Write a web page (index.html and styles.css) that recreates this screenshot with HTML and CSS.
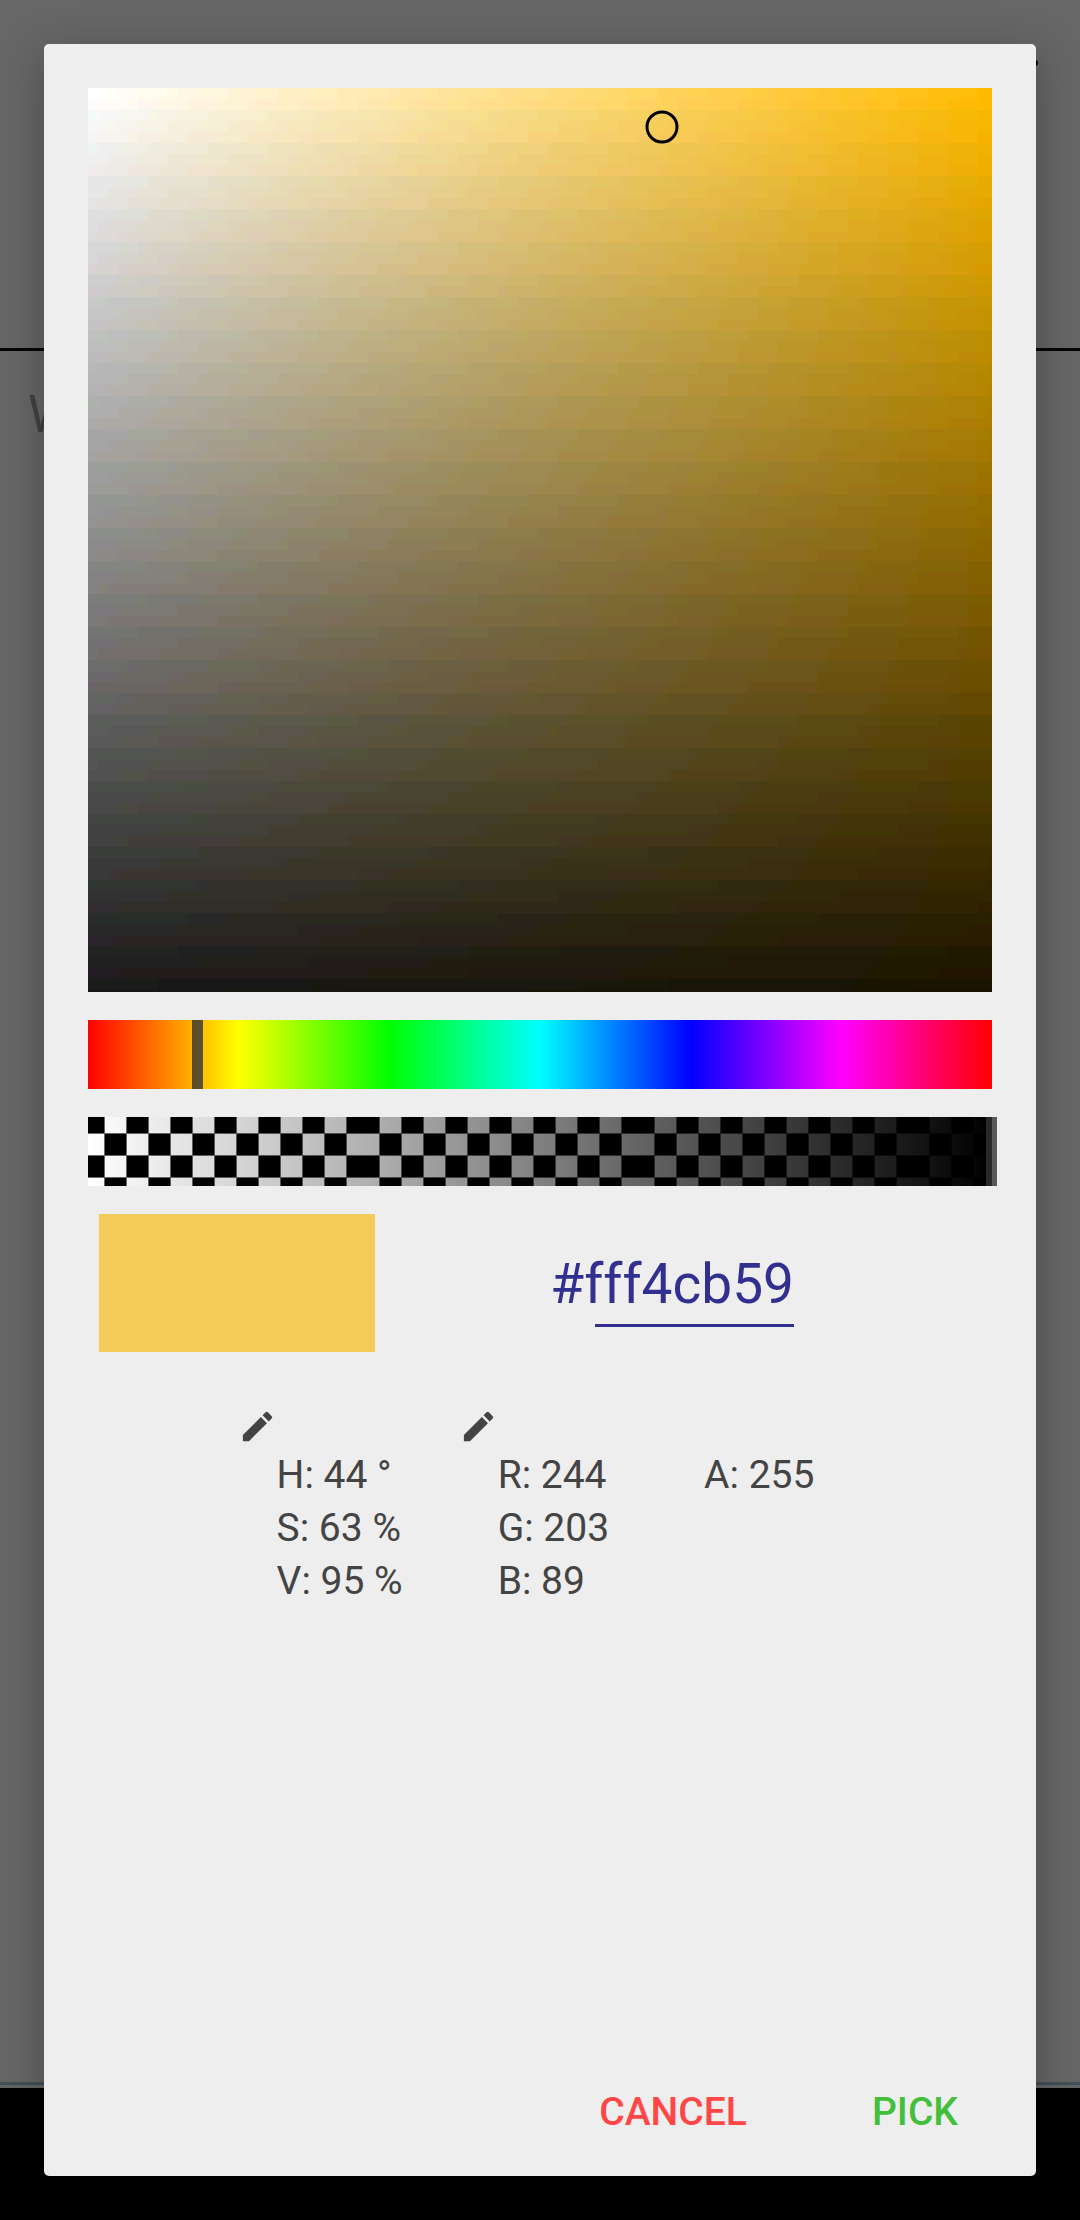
FILE: index.html
```html
<!DOCTYPE html>
<html lang="en">
<head>
<meta charset="utf-8">
<meta name="viewport" content="width=device-width, initial-scale=1">
<title>Color picker</title>
<link rel="stylesheet" href="styles.css">
</head>
<body>
<div class="app" aria-hidden="true">
  <header class="app-bar"><span class="app-dot"></span></header>
  <p class="app-text">W</p>
  <div class="app-footer"></div>
  <div class="nav-bar"></div>
</div>
<div class="overlay">
  <form class="dialog" role="dialog" aria-label="Color picker">
    <div class="picker">
      <div class="field">
        <canvas class="field-canvas" id="field" width="904" height="904"></canvas>
        <span class="ring" style="left:63.5%;top:4.3%"></span>
      </div>
      <div class="track track-hue">
        <input class="slider" type="range" min="0" max="360" value="44" aria-label="Hue">
      </div>
      <div class="track">
        <canvas class="track-canvas" id="alpha" width="904" height="69"></canvas>
        <input class="slider" type="range" min="0" max="255" value="255" aria-label="Alpha">
      </div>
      <div class="result">
        <div class="swatch"></div>
        <input class="hex" type="text" value="#fff4cb59" aria-label="Hex color">
      </div>
      <div class="values">
        <div class="group">
          <button class="edit" type="button" aria-label="Edit HSV"><svg class="icon" viewBox="0 0 24 24"><path d="M3 17.25V21h3.75L17.81 9.94l-3.75-3.75L3 17.25zM20.71 7.04a1 1 0 0 0 0-1.41l-2.34-2.34a1 1 0 0 0-1.41 0l-1.83 1.83 3.75 3.75 1.83-1.83z"/></svg></button>
          <div class="lines"><div>H: 44 °</div><div>S: 63 %</div><div>V: 95 %</div></div>
        </div>
        <div class="group">
          <button class="edit" type="button" aria-label="Edit RGB"><svg class="icon" viewBox="0 0 24 24"><path d="M3 17.25V21h3.75L17.81 9.94l-3.75-3.75L3 17.25zM20.71 7.04a1 1 0 0 0 0-1.41l-2.34-2.34a1 1 0 0 0-1.41 0l-1.83 1.83 3.75 3.75 1.83-1.83z"/></svg></button>
          <div class="lines"><div>R: 244</div><div>G: 203</div><div>B: 89</div></div>
        </div>
        <div class="group">
          <div class="lines"><div>A: 255</div></div>
        </div>
      </div>
    </div>
    <div class="actions">
      <button class="action cancel" type="button">CANCEL</button>
      <button class="action pick" type="button">PICK</button>
    </div>
  </form>
</div>
<script src="picker.js"></script>
</body>
</html>
```

FILE: styles.css
```css
* { box-sizing: border-box; }

body {
  margin: 0;
  display: grid;
  min-height: 100vh;
  background: #000;
  font-family: Roboto, "Liberation Sans", sans-serif;
  color: #444;
}

.app, .overlay { grid-area: 1 / 1; min-width: 0; }

/* dimmed screen behind the dialog */
.app {
  display: flex;
  flex-direction: column;
  background: #676767;
}
.app-bar {
  display: flex;
  justify-content: flex-end;
  height: 351px;
  padding: 60px 42px;
  border-bottom: 3px solid #060606;
}
.app-dot {
  width: 6px;
  height: 6px;
  border-radius: 50%;
  background: #000;
}
.app-text {
  flex: 1;
  margin: 0;
  padding: 34px 28px;
  font-size: 51px;
  line-height: 60px;
  color: #424242;
}
.app-footer {
  height: 6px;
  background: #626668;
  border-top: 3px solid #454f56;
}
.nav-bar { height: 132px; background: #000; }

.overlay {
  display: grid;
  padding: 44px;
  position: relative;
}
.dialog {
  display: flex;
  flex-direction: column;
  justify-content: space-between;
  background: #eee;
  border-radius: 5px;
  box-shadow: 0 12px 48px rgba(0, 0, 0, .3);
}
.picker {
  display: flex;
  flex-direction: column;
  gap: 28px;
  padding: 44px 44px 0;
}

.field { position: relative; }
.field-canvas { display: block; width: 100%; }
.ring {
  position: absolute;
  width: 33px;
  height: 33px;
  border: 3px solid #000;
  border-radius: 50%;
  transform: translate(-50%, -50%);
}

.track { display: grid; height: 69px; }
.track-hue {
  background: linear-gradient(to right, #f00, #ff0, #0f0, #0ff, #00f, #f0f, #f00);
}
.track-canvas, .slider { grid-area: 1 / 1; height: 69px; }
.track-canvas { width: 100%; }
.slider {
  appearance: none;
  width: calc(100% + 11px);
  margin: 0 0 0 -6px;
  background: transparent;
  z-index: 1;
}
.slider::-webkit-slider-thumb {
  appearance: none;
  width: 11px;
  height: 69px;
  background: rgba(51, 51, 51, .8);
}
.slider::-moz-range-thumb {
  width: 11px;
  height: 69px;
  border: 0;
  border-radius: 0;
  background: rgba(51, 51, 51, .8);
}

.result {
  display: flex;
  justify-content: space-between;
  padding: 0 198px 0 11px;
}
.swatch { width: 276px; height: 138px; background: #f4cb59; }
.hex {
  width: 256px;
  height: 138px;
  padding: 2px 0 0;
  border: 0;
  font: 55px/64px Roboto, "Liberation Sans", sans-serif;
  text-align: right;
  color: #312f8f;
  background: linear-gradient(#312f8f, #312f8f) right 110px / 199px 3px no-repeat;
}

.values {
  display: flex;
  justify-content: center;
  gap: 56px;
  padding: 27px 28px 0 0;
}
.group {
  display: grid;
  grid-template-columns: 39px auto;
  grid-template-rows: 42px auto;
}
.edit {
  display: block;
  width: 39px;
  height: 39px;
  padding: 0;
  border: 0;
  background: none;
  color: inherit;
}
.icon { display: block; width: 39px; height: 39px; fill: currentColor; }
.lines {
  grid-area: 2 / 2;
  font-size: 39px;
  line-height: 53px;
  white-space: nowrap;
}

.actions { display: flex; justify-content: flex-end; }
.action {
  width: 242px;
  height: 128px;
  padding: 0;
  border: 0;
  background: none;
  font: 500 39px/46px Roboto, "Liberation Sans", sans-serif;
}
.cancel { color: #ff4747; }
.pick { color: #43bf3c; }
```

FILE: picker.js
```js
// Saturation/value field, painted in 10x11 cells with 5-6-5 bit colours.
var hue = 44;
var cellW = 10, cellH = 11;

function hsv(h, s, v) {
  function f(n) {
    var k = (n + h / 60) % 6;
    return v - v * s * Math.max(0, Math.min(k, 4 - k, 1));
  }
  return [f(5), f(3), f(1)];
}

function quantize(c, levels) {
  return Math.round(Math.round(c * levels) / levels * 255);
}

var field = document.getElementById('field');
var ctx = field.getContext('2d');
for (var y = 0; y < field.height; y += cellH) {
  for (var x = 0; x < field.width; x += cellW) {
    var c = hsv(hue, x / field.width, 1 - 0.908 * y / field.height);
    ctx.fillStyle = 'rgb(' + quantize(c[0], 31) + ',' + quantize(c[1], 63) + ',' + quantize(c[2], 31) + ')';
    ctx.fillRect(x, y, cellW, cellH);
  }
}

// Alpha track: a checkerboard whose light cells fade to black.
var alpha = document.getElementById('alpha');
var a = alpha.getContext('2d');
a.fillStyle = '#fff';
a.fillRect(0, 0, alpha.width, alpha.height);

var columns = [0];
for (var edge = 16, i = 1; edge < alpha.width; i++) {
  columns.push(edge);
  edge += i % 12 === 0 ? 33 : 22;
}
columns.push(alpha.width);
var rows = [0, 16, 38, 60, 69];

for (var r = 0; r < rows.length - 1; r++) {
  for (var k = 0; k < columns.length - 1; k++) {
    if ((r + k) % 2 === 0) {
      a.fillStyle = '#000';
      a.fillRect(columns[k], rows[r], columns[k + 1] - columns[k], rows[r + 1] - rows[r]);
    }
  }
}
a.fillStyle = '#6a6a6a';
columns.slice(1, -1).forEach(function (cx) { a.fillRect(cx, 0, 1, alpha.height); });
rows.slice(1, -1).forEach(function (ry) { a.fillRect(0, ry, alpha.width, 1); });

var fade = a.createLinearGradient(0, 0, alpha.width, 0);
fade.addColorStop(0, 'rgba(0,0,0,0)');
fade.addColorStop(1, 'rgba(0,0,0,1)');
a.fillStyle = fade;
a.fillRect(0, 0, alpha.width, alpha.height);
```
